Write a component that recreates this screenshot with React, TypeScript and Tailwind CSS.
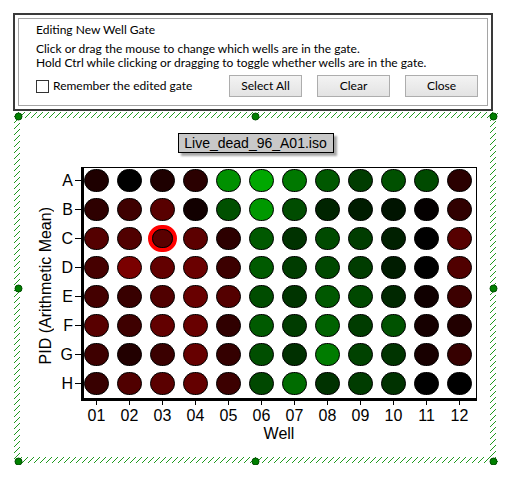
import React from "react";

const ROWS = ["A", "B", "C", "D", "E", "F", "G", "H"];
const COLS = ["01", "02", "03", "04", "05", "06", "07", "08", "09", "10", "11", "12"];

// mean intensity per well, already mapped to the red/green scale
const WELLS: string[][] = [
  ["#1e0000", "#000000", "#1e0000", "#2a0000", "#009000", "#00a800", "#007800", "#005800", "#003c00", "#005000", "#004a00", "#2a0000"],
  ["#2e0000", "#3e0000", "#580000", "#120000", "#005000", "#009800", "#004c00", "#002400", "#001c00", "#001400", "#040000", "#300000"],
  ["#540000", "#500000", "#5a0000", "#5c0000", "#2c0000", "#005800", "#003200", "#004a00", "#003c00", "#002000", "#000000", "#560000"],
  ["#460000", "#7a0000", "#620000", "#6a0000", "#3c0000", "#005a00", "#003c00", "#004800", "#003c00", "#001c00", "#000000", "#500000"],
  ["#440000", "#380000", "#500000", "#680000", "#540000", "#004c00", "#003400", "#005800", "#004800", "#002800", "#100000", "#3c0000"],
  ["#580000", "#3e0000", "#620000", "#680000", "#300000", "#005a00", "#003c00", "#006200", "#003c00", "#005200", "#160000", "#220000"],
  ["#3e0000", "#220000", "#3a0000", "#660000", "#340000", "#004e00", "#003000", "#007c00", "#004200", "#003400", "#180000", "#360000"],
  ["#380000", "#500000", "#5a0000", "#640000", "#3c0000", "#004800", "#006c00", "#003200", "#003c00", "#003200", "#000000", "#000000"],
];

const SELECTED = { row: 2, col: 2 };

const HANDLES: [number, number][] = [
  [4, 5], [241, 5], [479, 5],
  [4, 177], [479, 177],
  [4, 350], [241, 350], [479, 350],
];

const DialogButton = ({ label }: { label: string }) => (
  <button className="h-[22px] w-[73px] border border-[#adadad] bg-gradient-to-b from-[#f3f3f3] to-[#e3e3e3] text-[12px] leading-none text-black">
    {label}
  </button>
);

const EditGateDialog = () => (
  <div className="ml-[13px] mt-[13px] h-[98px] w-[480px] border-2 border-[#3a3a3a] bg-white p-[3px]">
    <div className="h-full border border-[#a5a5a5] pl-[17px] pr-[9px] pt-[3px] font-['Lato','Liberation_Sans',sans-serif] text-[12px] text-black">
      <div className="leading-[16px]">Editing New Well Gate</div>
      <div className="mt-[4px] leading-[14px]">
        <div>Click or drag the mouse to change which wells are in the gate.</div>
        <div>Hold Ctrl while clicking or dragging to toggle whether wells are in the gate.</div>
      </div>
      <div className="mt-[5px] flex h-[22px] items-center justify-between">
        <label className="flex items-center gap-[4px]">
          <span className="h-[13px] w-[13px] border border-[#333333] bg-white" />
          <span>Remember the edited gate</span>
        </label>
        <div className="flex gap-[15px]">
          <DialogButton label="Select All" />
          <DialogButton label="Clear" />
          <DialogButton label="Close" />
        </div>
      </div>
    </div>
  </div>
);

const Well = ({ color, selected }: { color: string; selected: boolean }) => (
  <div
    className="relative h-[23px] w-[25px] rounded-full border border-black"
    style={{ backgroundColor: color }}
  >
    {selected ? (
      <>
        <div className="absolute -inset-[3px] rounded-full border-[4px] border-[#ff0000]" />
        <div className="absolute inset-[1px] rounded-full border border-black" />
      </>
    ) : null}
  </div>
);

const SelectionFrame = () => (
  <svg
    className="pointer-events-none absolute -left-[4px] -top-[5px]"
    width="484"
    height="354"
    viewBox="0 0 484 354"
  >
    <defs>
      <pattern id="hatch" width="6" height="6" patternUnits="userSpaceOnUse">
        <path d="M0 6 L6 0 M-1 1 L1 -1 M5 7 L7 5" stroke="#1f9a1f" strokeWidth="1" />
      </pattern>
    </defs>
    <rect x="0" y="1" width="484" height="6" fill="url(#hatch)" />
    <rect x="0" y="346" width="484" height="6" fill="url(#hatch)" />
    <rect x="0" y="1" width="6" height="351" fill="url(#hatch)" />
    <rect x="476" y="1" width="6" height="351" fill="url(#hatch)" />
    {HANDLES.map(([x, y]) => (
      <circle key={`${x}-${y}`} cx={x + 0.5} cy={y + 0.5} r="3.5" fill="#008000" stroke="#004d00" strokeWidth="1" />
    ))}
  </svg>
);

const PlateChart = () => (
  <div className="relative ml-[18px] mt-[5px] h-[345px] w-[475px] pt-[17px] font-['Liberation_Sans',Arial,sans-serif] text-black">
    <div className="mx-auto h-[20px] w-[156px] border border-black bg-[#c8c8c8] text-center text-[14px] leading-[18px] shadow-[3px_3px_2px_rgba(0,0,0,0.35)]">
      Live_dead_96_A01.iso
    </div>

    <div className="mt-[14px] flex">
      <div className="ml-[19px] flex w-[18px] items-center justify-center pt-[3px]">
        <span className="rotate-180 whitespace-nowrap text-[16px] leading-[18px] [writing-mode:vertical-rl]">
          PID (Arithmetic Mean)
        </span>
      </div>

      <div className="flex w-[26px] flex-col gap-[6px] pt-[2px]">
        {ROWS.map((row) => (
          <div key={row} className="flex h-[23px] items-center justify-end">
            <span className="text-[16px] leading-none">{row}</span>
            <span className="ml-[2px] h-px w-[6px] bg-black" />
          </div>
        ))}
      </div>

      <div className="w-[396px] border-b-[3px] border-l-[3px] border-r border-t border-black bg-white pb-[3px] pr-[4px] pt-[1px]">
        <div className="grid grid-cols-[repeat(12,25px)] gap-x-[8px] gap-y-[6px]">
          {WELLS.map((cells, r) =>
            cells.map((color, c) => (
              <Well
                key={`${r}-${c}`}
                color={color}
                selected={r === SELECTED.row && c === SELECTED.col}
              />
            )),
          )}
        </div>
      </div>
    </div>

    <div className="ml-[66px] grid grid-cols-[repeat(12,25px)] gap-x-[8px]">
      {COLS.map((col) => (
        <div key={col} className="flex flex-col items-center">
          <span className="h-[4px] w-px bg-black" />
          <span className="mt-[2px] text-[16px] leading-[18px]">{col}</span>
        </div>
      ))}
    </div>
    <div className="ml-[63px] w-[396px] text-center text-[16px] leading-[18px]">Well</div>

    <SelectionFrame />
  </div>
);

export default function App() {
  return (
    <div className="h-[485px] w-[519px] overflow-hidden bg-white">
      <EditGateDialog />
      <PlateChart />
    </div>
  );
}
